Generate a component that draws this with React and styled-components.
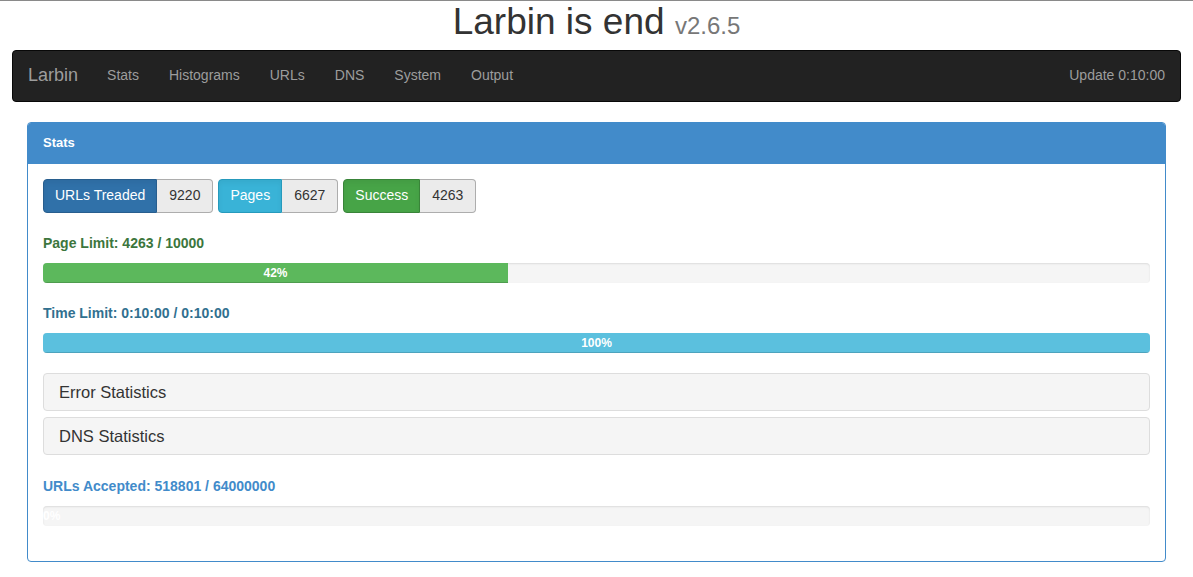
import React from "react";
import styled, { createGlobalStyle } from "styled-components";

const GlobalStyle = createGlobalStyle`
  * {
    box-sizing: border-box;
  }
  body {
    margin: 0;
    border-top: 1px solid #8a8a8a;
    background: #fff;
    font-family: "Liberation Sans", Arial, Helvetica, sans-serif;
    font-size: 14px;
    line-height: 1.428;
    color: #333;
  }
`;

const colors = {
  primary: "#3071a9",
  info: "#39b3d7",
  success: "#47a447",
  bar: "#5cb85c",
  barInfo: "#5bc0de",
  panel: "#428bca",
};

const stats = [
  { label: "URLs Treaded", value: "9220", color: colors.primary, border: "#285e8e" },
  { label: "Pages", value: "6627", color: colors.info, border: "#269abc" },
  { label: "Success", value: "4263", color: colors.success, border: "#398439" },
];

const limits = [
  { title: "Page Limit: 4263 / 10000", color: "#3c763d", fill: colors.bar, pct: 42 },
  { title: "Time Limit: 0:10:00 / 0:10:00", color: "#31708f", fill: colors.barInfo, pct: 100 },
];

const navLinks = ["Stats", "Histograms", "URLs", "DNS", "System", "Output"];

const App = () => {
  return (
    <Page>
      <GlobalStyle />
      <Title>
        Larbin is end <Version>v2.6.5</Version>
      </Title>
      <Navbar>
        <NavLeft>
          <Brand>Larbin</Brand>
          {navLinks.map((link) => (
            <NavLink key={link}>{link}</NavLink>
          ))}
        </NavLeft>
        <NavText>Update 0:10:00</NavText>
      </Navbar>
      <Content>
        <Panel>
          <PanelHeading>Stats</PanelHeading>
          <PanelBody>
            <Toolbar>
              {stats.map((s) => (
                <BtnGroup key={s.label}>
                  <LabelBtn $color={s.color} $border={s.border}>
                    {s.label}
                  </LabelBtn>
                  <ValueBtn>{s.value}</ValueBtn>
                </BtnGroup>
              ))}
            </Toolbar>
            {limits.map((l) => (
              <div key={l.title}>
                <Caption $color={l.color}>{l.title}</Caption>
                <Progress>
                  <Bar $fill={l.fill} style={{ width: `${l.pct}%` }}>
                    {l.pct}%
                  </Bar>
                </Progress>
              </div>
            ))}
            <PanelGroup>
              <SubPanel>
                <SubTitle>Error Statistics</SubTitle>
              </SubPanel>
              <SubPanel>
                <SubTitle>DNS Statistics</SubTitle>
              </SubPanel>
            </PanelGroup>
            <Caption $color={colors.panel}>URLs Accepted: 518801 / 64000000</Caption>
            <Progress>
              <Bar $fill={colors.panel} style={{ width: "0%" }}>
                0%
              </Bar>
            </Progress>
          </PanelBody>
        </Panel>
      </Content>
    </Page>
  );
};

export default App;

const Page = styled.div`
  padding: 0 12px;
`;

const Title = styled.h1`
  margin: 1px 0 7px;
  text-align: center;
  font-size: 37px;
  font-weight: 500;
  line-height: 1.1;
  color: #333;
`;

const Version = styled.small`
  font-size: 24px;
  color: #777;
`;

const Navbar = styled.nav`
  display: flex;
  align-items: center;
  justify-content: space-between;
  height: 52px;
  background: #222;
  border: 1px solid #080808;
  border-radius: 4px;
  padding: 1px 15px 0;
`;

const NavLeft = styled.div`
  display: flex;
  align-items: center;
`;

const Brand = styled.span`
  font-size: 18px;
  color: #9d9d9d;
  margin-right: 29px;
`;

const NavLink = styled.span`
  font-size: 14px;
  color: #9d9d9d;
  margin-right: 30px;
`;

const NavText = styled.span`
  font-size: 14px;
  color: #9d9d9d;
`;

const Content = styled.div`
  padding: 20px 15px 0;
`;

const Panel = styled.div`
  border: 1px solid ${colors.panel};
  border-radius: 4px;
  background: #fff;
`;

const PanelHeading = styled.div`
  background: ${colors.panel};
  color: #fff;
  font-size: 13px;
  font-weight: bold;
  padding: 11px 15px;
  height: 41px;
  border-radius: 3px 3px 0 0;
`;

const PanelBody = styled.div`
  padding: 15px;
`;

const Toolbar = styled.div`
  display: flex;
  gap: 5px;
  margin-bottom: 20px;
`;

const BtnGroup = styled.div`
  display: flex;
`;

const BaseBtn = styled.span`
  display: inline-flex;
  align-items: center;
  height: 34px;
  padding: 0 12px;
  font-size: 14px;
  border: 1px solid;
`;

const LabelBtn = styled(BaseBtn)`
  background: ${(p) => p.$color};
  border-color: ${(p) => p.$border};
  color: #fff;
  padding: 0 11px;
  border-radius: 4px 0 0 4px;
  box-shadow: inset 0 3px 5px rgba(0, 0, 0, 0.05);
`;

const ValueBtn = styled(BaseBtn)`
  background: #ebebeb;
  border-color: #adadad;
  border-left: none;
  color: #333;
  border-radius: 0 4px 4px 0;
`;

const Caption = styled.p`
  margin: 0 0 10px;
  height: 20px;
  line-height: 20px;
  font-size: 14px;
  font-weight: bold;
  color: ${(p) => p.$color};
`;

const Progress = styled.div`
  height: 20px;
  margin-bottom: 20px;
  background: #f5f5f5;
  border-radius: 4px;
  box-shadow: inset 0 1px 2px rgba(0, 0, 0, 0.1);
  overflow: hidden;
  display: flex;
`;

const Bar = styled.div`
  height: 100%;
  background: ${(p) => p.$fill};
  color: #fff;
  font-size: 12px;
  font-weight: bold;
  line-height: 20px;
  text-align: center;
  white-space: nowrap;
  box-shadow: inset 0 -1px 0 rgba(0, 0, 0, 0.15);
`;

const PanelGroup = styled.div`
  display: flex;
  flex-direction: column;
  gap: 6px;
  margin: 1px 0 21px;
`;

const SubPanel = styled.div`
  background: #f5f5f5;
  border: 1px solid #ddd;
  border-radius: 4px;
  height: 38px;
  padding: 2px 15px 0;
  display: flex;
  align-items: center;
`;

const SubTitle = styled.h4`
  margin: 0;
  font-size: 16.5px;
  font-weight: 500;
  color: #333;
`;
